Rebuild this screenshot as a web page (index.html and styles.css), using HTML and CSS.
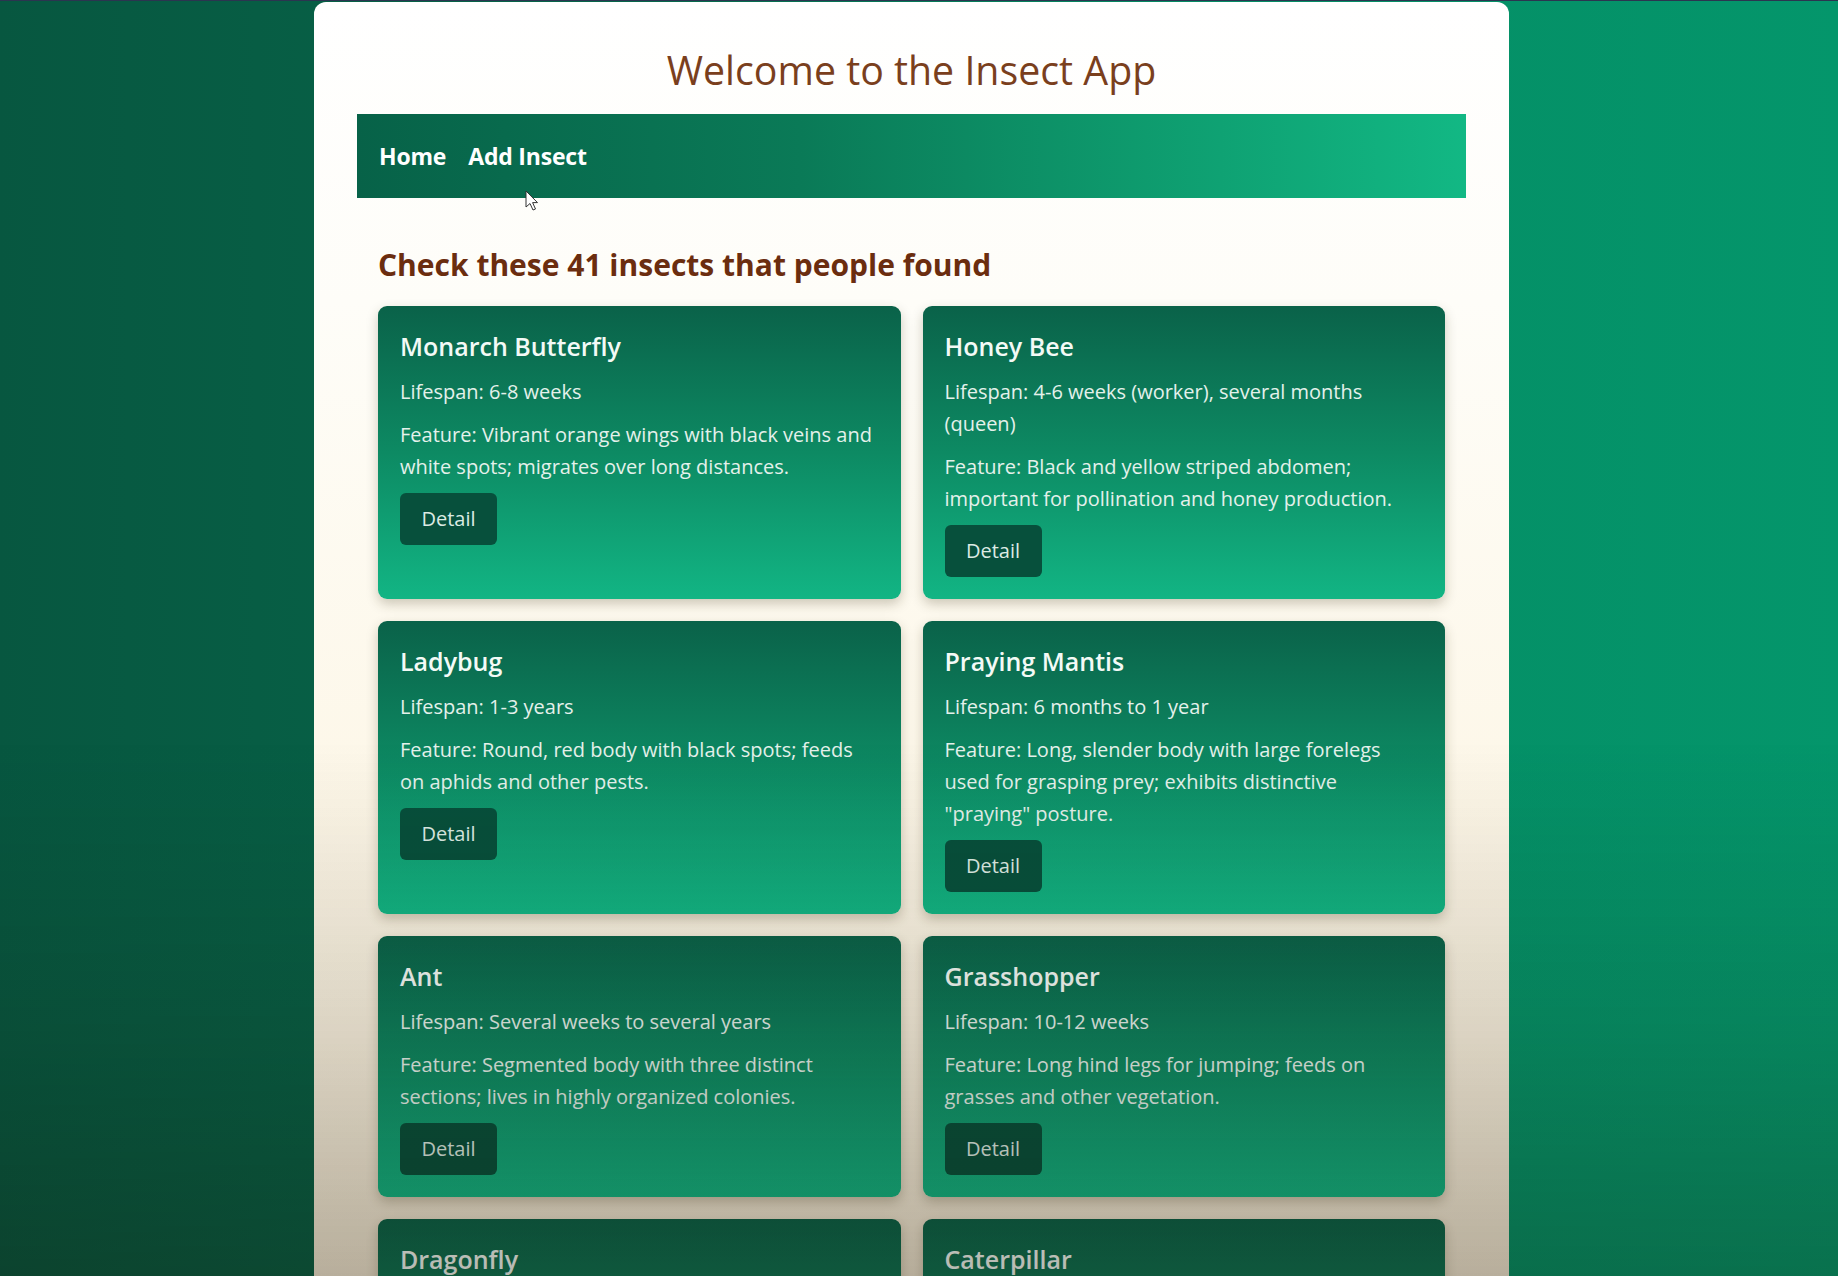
FILE: index.html
```html
<!DOCTYPE html>
<html lang="en">
<head>
<meta charset="utf-8">
<title>Insect App</title>
<link rel="stylesheet" href="styles.css">
</head>
<body>
<div class="page">
  <h1 class="site-title">Welcome to the Insect App</h1>
  <nav class="navbar">
    <a class="nav-link" href="#">Home</a>
    <a class="nav-link" href="#">Add Insect</a>
  </nav>
  <main class="content">
    <h2 class="list-heading">Check these 41 insects that people found</h2>
    <div class="card-grid">
      <div class="card">
        <h3 class="card-title">Monarch Butterfly</h3>
        <p class="card-text">Lifespan: 6-8 weeks</p>
        <p class="card-text">Feature: Vibrant orange wings with black veins and white spots; migrates over long distances.</p>
        <div><button class="btn">Detail</button></div>
      </div>
      <div class="card">
        <h3 class="card-title">Honey Bee</h3>
        <p class="card-text">Lifespan: 4-6 weeks (worker), several months (queen)</p>
        <p class="card-text">Feature: Black and yellow striped abdomen; important for pollination and honey production.</p>
        <div><button class="btn">Detail</button></div>
      </div>
      <div class="card">
        <h3 class="card-title">Ladybug</h3>
        <p class="card-text">Lifespan: 1-3 years</p>
        <p class="card-text">Feature: Round, red body with black spots; feeds on aphids and other pests.</p>
        <div><button class="btn">Detail</button></div>
      </div>
      <div class="card">
        <h3 class="card-title">Praying Mantis</h3>
        <p class="card-text">Lifespan: 6 months to 1 year</p>
        <p class="card-text">Feature: Long, slender body with large forelegs used for grasping prey; exhibits distinctive "praying" posture.</p>
        <div><button class="btn">Detail</button></div>
      </div>
      <div class="card">
        <h3 class="card-title">Ant</h3>
        <p class="card-text">Lifespan: Several weeks to several years</p>
        <p class="card-text">Feature: Segmented body with three distinct sections; lives in highly organized colonies.</p>
        <div><button class="btn">Detail</button></div>
      </div>
      <div class="card">
        <h3 class="card-title">Grasshopper</h3>
        <p class="card-text">Lifespan: 10-12 weeks</p>
        <p class="card-text">Feature: Long hind legs for jumping; feeds on grasses and other vegetation.</p>
        <div><button class="btn">Detail</button></div>
      </div>
      <div class="card">
        <h3 class="card-title">Dragonfly</h3>
        <p class="card-text">Lifespan: Several months to a few years</p>
        <p class="card-text">Feature: Long, slender body with two pairs of transparent wings; excellent fliers.</p>
        <div><button class="btn">Detail</button></div>
      </div>
      <div class="card">
        <h3 class="card-title">Caterpillar</h3>
        <p class="card-text">Lifespan: 2-5 weeks</p>
        <p class="card-text">Feature: Soft, segmented body; the larval stage of butterflies and moths.</p>
        <div><button class="btn">Detail</button></div>
      </div>
    </div>
  </main>
</div>
<svg class="cursor" width="14" height="22" viewBox="0 0 14 22" aria-hidden="true">
  <path d="M1 1 L1 17 L5 13.5 L8 20 L10.5 19 L7.6 12.6 L12.5 12.6 Z" fill="#ffffff" stroke="#333" stroke-width="1" stroke-linejoin="round"/>
</svg>
<div class="vignette"></div>
</body>
</html>
```
FILE: styles.css
```css
* { box-sizing: border-box; }

html, body { height: 100%; }

body {
  margin: 0;
  padding-right: 15px;
  overflow: hidden;
  font-family: "Open Sans", "Noto Sans", sans-serif;
  background: linear-gradient(90deg, #075740 0%, #07664a 35%, #058c64 65%, #04966b 100%);
  border-top: 1px solid #2b3550;
}

.page {
  width: 1195px;
  margin: 1px auto 0;
  padding: 44px 43px 40px;
  border-radius: 12px 12px 0 0;
  background: linear-gradient(180deg, #ffffff 0px, #fefdf8 300px, #fdf7e8 800px, #f3ead6 1276px);
  min-height: 1400px;
}

.site-title {
  margin: 0 0 20px;
  text-align: center;
  font-size: 39.3px;
  line-height: 48px;
  font-weight: 400;
  color: #7a3f1d;
}

.navbar {
  display: flex;
  align-items: center;
  gap: 22px;
  height: 84px;
  padding: 0 22px;
  background: linear-gradient(90deg, #076248 0%, #0a7a57 40%, #0e9a6d 70%, #12b884 100%);
}

.nav-link {
  color: #ffffff;
  text-decoration: none;
  font-size: 23px;
  font-weight: 700;
  letter-spacing: -0.2px;
}

.content {
  padding: 47px 21px 0;
}

.list-heading {
  margin: 0 0 21px;
  font-size: 30px;
  line-height: 40px;
  font-weight: 700;
  color: #6b2d0f;
}

.card-grid {
  display: grid;
  grid-template-columns: 1fr 1fr;
  gap: 22px;
}

.card {
  padding: 23px 22px 22px;
  border-radius: 9px;
  background: linear-gradient(180deg, #0a6249 0%, #0d8a63 50%, #12b584 100%);
  box-shadow: 0 5px 12px rgba(60, 50, 20, 0.25);
  color: #e4f1eb;
}

.card-title {
  margin: 0 0 13px;
  font-size: 25px;
  line-height: 34px;
  font-weight: 600;
  color: #f3faf6;
}

.card-text {
  margin: 0 0 10.5px;
  font-size: 20px;
  line-height: 32px;
}

.btn {
  border: 0;
  border-radius: 6px;
  padding: 10px 21.5px;
  background: #07503c;
  color: #dcebe4;
  font-family: inherit;
  font-size: 20px;
  line-height: 32px;
}

.cursor {
  position: absolute;
  left: 525px;
  top: 190px;
}

.vignette {
  position: fixed;
  inset: 0;
  pointer-events: none;
  background: linear-gradient(180deg, rgba(0,0,0,0) 0%, rgba(0,0,0,0) 58%, rgba(25,15,0,0.12) 80%, rgba(25,15,0,0.27) 100%);
}
```
